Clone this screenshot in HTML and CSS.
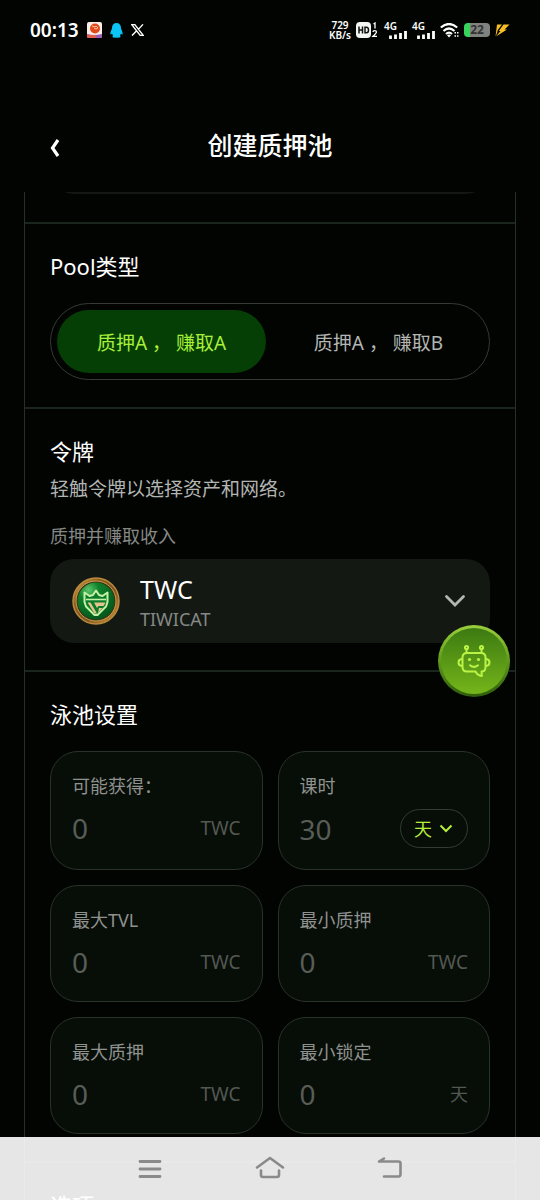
FILE: index.html
```html
<!DOCTYPE html>
<html lang="zh-CN">
<head>
<meta charset="utf-8">
<meta name="viewport" content="width=device-width, initial-scale=1">
<title>创建质押池</title>
<link rel="stylesheet" href="styles.css">
</head>
<body>
<div class="app">
  <div class="status">
    <span class="clock">00:13</span>
    <svg class="s-app" width="15" height="16" viewBox="0 0 15 16" aria-hidden="true">
      <rect width="15" height="16" rx="2" fill="#f7efe8"/>
      <circle cx="8" cy="6.500" r="5" fill="#e2491c"/>
      <path d="M5 4l3 1 1-1 2 2-2 1-2-1" fill="none" stroke="#ffc29b" stroke-width="1"/>
      <path d="M0 12q7 2 15 0v2q0 2-2 2H2q-2 0-2-2z" fill="#a05bb8"/>
      <path d="M0 12q5 2 9 1v3H2q-2 0-2-2z" fill="#e4604e"/>
    </svg>
    <svg class="s-qq" width="13" height="15" viewBox="0 0 13 15" aria-hidden="true">
      <path d="M6.500 0C3.600 0 2 2 2 5 2 6.500.3 8.500.3 10.800c0 1.300.9.800 1.700-.2.200.8.500 1.300 1 1.800-.7.400-.8 2 .5 2.200 1.200.2 2.300.1 3-.2.700.3 1.800.4 3 .2 1.300-.2 1.200-1.800.5-2.200.5-.5.800-1 1-1.800.8 1 1.700 1.500 1.700.2 0-2.300-1.700-4.300-1.700-5.800 0-3-1.600-5-4.500-5z" fill="#0bc3f5"/>
    </svg>
    <svg class="s-x" width="13" height="12" viewBox="0 0 13 12" aria-hidden="true">
      <path d="M.8.600h3l8.400 10.800h-3zM12 .400L7.400 5.400M5.400 7L1 11.600" fill="none" stroke="#fff" stroke-width="1.400"/>
    </svg>
    <span class="speed"><span>729</span><span>KB/s</span></span>
    <svg width="23" height="16" viewBox="0 0 23 16" aria-hidden="true">
      <rect width="15" height="16" rx="4" fill="#f4f6f4"/>
      <path d="M3 4.500v7M6.500 4.500v7M3 8h3.500M9 5.200h1.500q2 0 2 2.800t-2 2.800H9z" fill="none" stroke="#111" stroke-width="1.500"/>
      <path d="M17.500 2l1.500-1v5.500M17 10q0-1.300 1.700-1.300 1.800 0 1.800 1.300 0 1-3.500 4.300h4" fill="none" stroke="#fff" stroke-width="1.300"/>
    </svg>
    <span class="signal"><span>4G</span>
      <svg width="18" height="8" viewBox="0 0 18 8" aria-hidden="true"><path d="M1.500 8V4.500M6.500 8V3.500M11.500 8V2M16.500 8V0" stroke="#fff" stroke-width="2.800"/></svg>
    </span>
    <span class="signal"><span>4G</span>
      <svg width="18" height="8" viewBox="0 0 18 8" aria-hidden="true"><path d="M1.500 8V4.500M6.500 8V3.500M11.500 8V2M16.500 8V0" stroke="#fff" stroke-width="2.800"/></svg>
    </span>
    <svg width="19" height="15" viewBox="0 0 19 15" aria-hidden="true">
      <path d="M.8 4.500q8.200-7 16.400 0M3.500 8q5.500-5 11 0M6 11q3-2.600 6 0" fill="none" stroke="#fff" stroke-width="2.200"/>
      <path d="M9 14.500l-2-2.300q2-1.500 4 0zM14.500 9h1.500v1.500h-1.500zM17 9h1.500v1.500H17zM14.500 12.200h1.500v1.500h-1.500zM17 12.200h1.500v1.500H17z" fill="#fff"/>
    </svg>
    <span class="battery">22</span>
    <svg class="s-bolt" width="15" height="13" viewBox="0 0 15 13" aria-hidden="true">
      <path d="M2 .5h5L2.800 6 2 9 .5 12.500z" fill="#f7c022"/>
      <path d="M8.500.5h6L9.500 5.500h2.500L1 12.500l4.500-5.500H3.800z" fill="#f7c022"/>
    </svg>
  </div>

  <header class="header">
    <button class="back" type="button" aria-label="返回">
      <svg width="12" height="26" viewBox="0 0 12 26" aria-hidden="true"><path d="M10 8L4.500 16l5.500 8" fill="none" stroke="#fff" stroke-width="3.200"/></svg>
    </button>
    <h1>创建质押池</h1>
  </header>

  <main class="scroll">
    <div class="card">
      <section class="section section-prev"><div class="panel"></div></section>

      <section class="section">
        <h2>Pool类型</h2>
        <div class="segment">
          <button class="tab tab-active" type="button" aria-pressed="true">质押A ， 赚取A</button>
          <button class="tab" type="button" aria-pressed="false">质押A ， 赚取B</button>
        </div>
      </section>

      <section class="section">
        <h2 class="tight">令牌</h2>
        <p class="hint">轻触令牌以选择资产和网络。</p>
        <p class="caption" id="token-label">质押并赚取收入</p>
        <button class="panel token" type="button" aria-describedby="token-label">
          <svg width="48" height="48" viewBox="0 0 48 48" aria-hidden="true">
            <defs>
              <linearGradient id="gold" x1="0" y1="0" x2="1" y2="1">
                <stop offset="0" stop-color="#e0b45c"/><stop offset=".3" stop-color="#8c5a1e"/>
                <stop offset=".6" stop-color="#7d5420"/><stop offset="1" stop-color="#d39a3c"/>
              </linearGradient>
              <radialGradient id="green" cx=".3" cy=".2" r=".8">
                <stop offset="0" stop-color="#5cc56a"/><stop offset=".35" stop-color="#10812b"/><stop offset="1" stop-color="#045a1c"/>
              </radialGradient>
            </defs>
            <circle cx="24" cy="24" r="23" fill="url(#gold)" stroke="#b98a3c" stroke-width="1.500"/>
            <circle cx="24" cy="24" r="20" fill="#3a3512" stroke="#c99a4e" stroke-width="1"/>
            <circle cx="24" cy="24" r="18.500" fill="url(#green)"/>
            <path d="M12.500 15.500l5 3.500 3.500-1 3-4.500 3 4.500 3.500 1 5-3.500V25l-1.500 4.500L25.500 38h-3L14 29.500 12.500 25z" fill="#0b7a2b" stroke="#c4f2a4" stroke-width="2" stroke-linejoin="round"/>
            <path d="M14 22.500h20" stroke="#c4f2a4" stroke-width="1.600"/>
            <path d="M15.500 25.500h3l6.500 11h-2.500zM22 25.500h11.500l-2 3.500h-5l-1.500 2zM27 31h3.500L26 36z" fill="#e3c48c"/>
          </svg>
          <span class="token-text"><span class="symbol">TWC</span><span class="name">TIWICAT</span></span>
          <svg class="chev" width="22" height="14" viewBox="0 0 22 14" aria-hidden="true"><path d="M2.500 2.500l8.500 8.500 8.500-8.500" fill="none" stroke="#b4b6b4" stroke-width="2.800" stroke-linecap="round"/></svg>
        </button>
      </section>

      <section class="section">
        <h2>泳池设置</h2>
        <div class="fields">
          <div class="field">
            <label for="earn">可能获得：</label>
            <div class="row"><input id="earn" type="text" inputmode="decimal" placeholder="0"><span class="unit">TWC</span></div>
          </div>
          <div class="field">
            <label for="period">课时</label>
            <div class="row"><input id="period" type="text" inputmode="numeric" placeholder="30">
              <span class="pill">
                <select aria-label="时间单位"><option>天</option></select>
                <svg width="14" height="9" viewBox="0 0 14 9" aria-hidden="true"><path d="M1.500 1.500L7 7l5.500-5.500" fill="none" stroke="#b5ee3c" stroke-width="2"/></svg>
              </span>
            </div>
          </div>
          <div class="field">
            <label for="tvl">最大TVL</label>
            <div class="row"><input id="tvl" type="text" inputmode="decimal" placeholder="0"><span class="unit">TWC</span></div>
          </div>
          <div class="field">
            <label for="min">最小质押</label>
            <div class="row"><input id="min" type="text" inputmode="decimal" placeholder="0"><span class="unit">TWC</span></div>
          </div>
          <div class="field">
            <label for="max">最大质押</label>
            <div class="row"><input id="max" type="text" inputmode="decimal" placeholder="0"><span class="unit">TWC</span></div>
          </div>
          <div class="field">
            <label for="lock">最小锁定</label>
            <div class="row"><input id="lock" type="text" inputmode="numeric" placeholder="0"><span class="unit unit-day">天</span></div>
          </div>
        </div>
      </section>

      <section class="section">
        <h2>选项</h2>
      </section>
    </div>
  </main>

  <button class="assistant" type="button" aria-label="智能助手">
    <svg width="34" height="34" viewBox="0 0 34 34" aria-hidden="true">
      <g fill="none" stroke="#b9f345" stroke-width="2" stroke-linejoin="round" stroke-linecap="round">
        <circle cx="9.500" cy="3.500" r="1.600"/><circle cx="24.500" cy="3.500" r="1.600"/>
        <path d="M9.500 5.500V9M24.500 5.500V9"/>
        <path d="M10 9h14q4.500 0 4.500 4.500V23q0 4.500-4 4.500l.3 4.500q-4.300-.5-6.300-4.500H10q-4.500 0-4.500-4.500v-9.500Q5.500 9 10 9z"/>
        <path d="M5 15q-3.500.3-3.500 3.500T5 22M29 15q3.500.3 3.500 3.500T29 22M13 21.300q4 3.200 8 0"/>
      </g>
      <circle cx="12.500" cy="15.500" r="1.600" fill="#b9f345"/><circle cx="21.500" cy="15.500" r="1.600" fill="#b9f345"/>
    </svg>
  </button>

  <nav class="navbar" aria-label="系统导航">
    <button type="button" aria-label="最近任务"><svg width="30" height="26" viewBox="0 0 30 26" aria-hidden="true"><path d="M5 5.500h20M5 13h20M5 20.500h20" stroke="#8a8a8a" stroke-width="2.800" stroke-linecap="round"/></svg></button>
    <button type="button" aria-label="主屏幕"><svg width="30" height="26" viewBox="0 0 30 26" aria-hidden="true"><path d="M2 11.500L15 2 28 11.500M6 14.500V19q0 2 2 2h14q2 0 2-2v-4.500" fill="none" stroke="#8a8a8a" stroke-width="2.600" stroke-linecap="round" stroke-linejoin="round"/></svg></button>
    <button type="button" aria-label="返回上一页"><svg width="30" height="26" viewBox="0 0 30 26" aria-hidden="true"><path d="M9 2.500L4 5.500h19.500q2 0 2 2V18q0 2.500-2 2.500H9" fill="none" stroke="#8a8a8a" stroke-width="2.600" stroke-linecap="round" stroke-linejoin="round"/></svg></button>
  </nav>
</div>
</body>
</html>
```
FILE: styles.css
```css
* { box-sizing: border-box; }

body {
  margin: 0;
  background: #010401;
  color: #fff;
  font-family: "Noto Sans", "Noto Sans CJK SC", sans-serif;
}

button, input, select { font: inherit; color: inherit; }
button { border: 0; padding: 0; background: none; cursor: pointer; }
h1, h2, p { margin: 0; }
svg { display: block; flex: none; }

.app {
  position: relative;
  display: flex;
  flex-direction: column;
  height: 100vh;
  overflow: hidden;
}

/* Status bar */
.status {
  display: flex;
  align-items: center;
  flex: none;
  gap: 5px;
  height: 60px;
  padding: 0 30px;
}
.clock { font-size: 19px; font-weight: 600; line-height: 24px; margin-right: 3px; }
.s-qq { margin: 0 3px; }
.s-x { margin-right: auto; }
.speed {
  display: flex;
  flex-direction: column;
  align-items: center;
  font-size: 10px;
  font-weight: 600;
  line-height: 10px;
}
.signal {
  display: flex;
  flex-direction: column;
  align-items: flex-end;
  width: 23px;
  font-size: 10px;
  font-weight: 600;
  line-height: 9px;
}
.signal span { align-self: flex-start; }
.battery {
  width: 26px;
  height: 14px;
  border-radius: 4px;
  background: linear-gradient(90deg, #38d35c 6px, #7f827f 6px);
  color: #333;
  font-size: 12px;
  font-weight: 700;
  line-height: 14px;
  text-align: center;
}

/* Page header */
.header {
  display: grid;
  grid-template-columns: 40px 1fr 40px;
  align-items: center;
  flex: none;
  padding: 67px 48px 29px;
}
.header h1 {
  font-size: 25px;
  font-weight: 500;
  line-height: 36px;
  text-align: center;
}

/* Scrolling form */
.scroll { flex: 1; min-height: 0; overflow: hidden; padding: 0 24px; }
.card { border: 1px solid #273027; border-width: 0 1px; }
.section { padding: 27px 25px; border-bottom: 2px solid #1a251b; }
.section-prev { margin-top: -82px; padding-top: 0; padding-bottom: 28px; }
.section h2 {
  margin-bottom: 22px;
  font-size: 22px;
  font-weight: 400;
  line-height: 30px;
}
.section .tight { margin-bottom: 9px; }

.panel {
  width: 100%;
  height: 84px;
  border-radius: 24px;
  background: #131813;
}

.segment {
  display: grid;
  grid-template-columns: 1fr 1fr;
  gap: 8px;
  padding: 6px;
  border: 1px solid #343a34;
  border-radius: 40px;
}
.tab {
  height: 63px;
  border-radius: 32px;
  color: #b4b6b4;
  font-size: 19px;
}
.tab-active { background: #063f05; color: #a9f03a; }

.hint { color: #b3b5b3; font-size: 19px; line-height: 28px; }
.caption { margin: 20px 0 10px; color: #858885; font-size: 18px; line-height: 26px; }

.token {
  display: flex;
  align-items: center;
  gap: 20px;
  padding: 0 24px 0 22px;
  text-align: left;
}
.token-text { display: flex; flex: 1; flex-direction: column; padding-top: 3px; }
.symbol { font-size: 25px; line-height: 32px; }
.name { color: #858885; font-size: 18px; line-height: 28px; }

.fields { display: grid; grid-template-columns: 1fr 1fr; gap: 15px; }
.field {
  min-width: 0;
  padding: 22px 21px 21px;
  border: 1px solid #2a332a;
  border-radius: 28px;
  background: #070d07;
}
.field label {
  display: block;
  margin-bottom: 11px;
  color: #8f928f;
  font-size: 18px;
  line-height: 24px;
}
.row { display: flex; align-items: center; justify-content: space-between; min-height: 37px; }
.row input {
  flex: 1;
  min-width: 0;
  width: 0;
  height: 36px;
  padding: 0;
  border: 0;
  outline: 0;
  background: none;
  color: #fff;
  font-size: 28px;
}
.row input::placeholder { color: #585d58; opacity: 1; }
.unit { color: #535853; font-size: 19px; line-height: 26px; }
.unit-day { font-size: 18px; }

.pill {
  position: relative;
  display: flex;
  align-items: center;
  flex: none;
}
.pill select {
  appearance: none;
  width: 68px;
  height: 39px;
  padding: 0 0 0 13px;
  border: 1px solid #343b34;
  border-radius: 20px;
  background: #070d07;
  color: #b5ee3c;
  font-size: 18px;
}
.pill svg { position: absolute; right: 15px; pointer-events: none; }

/* Floating assistant button */
.assistant {
  position: absolute;
  top: 625px;
  right: 30px;
  display: grid;
  place-items: center;
  width: 72px;
  height: 72px;
  border: 3px solid transparent;
  border-radius: 50%;
  background:
    linear-gradient(#3c7a12, #75b51a) padding-box,
    linear-gradient(#9bcf3c, #5f9a1c 50%, #2f5c0c) border-box;
}

/* System navigation */
.navbar {
  position: absolute;
  right: 0;
  bottom: 0;
  left: 0;
  display: flex;
  align-items: center;
  justify-content: center;
  gap: 90px;
  height: 63px;
  background: rgba(255, 255, 255, 0.9);
}
```
